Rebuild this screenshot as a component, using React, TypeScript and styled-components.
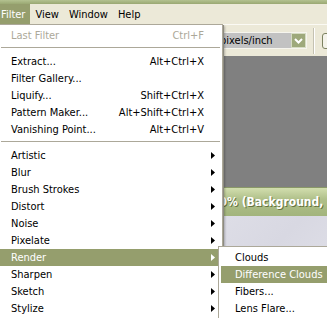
import React from 'react';
import styled, { createGlobalStyle } from 'styled-components';

const GlobalStyle = createGlobalStyle`
  html, body {
    margin: 0;
    padding: 0;
    overflow: hidden;
  }
`;

const Screen = styled('div')`
  position: relative;
  width: 327px;
  height: 318px;
  overflow: hidden;
  display: flex;
  flex-direction: column;
  font-family: "DejaVu Sans Condensed", "Liberation Sans", sans-serif;
  font-size: 11px;
  color: #000;
  background: #ece9d8;
`;

const TitleStrip = styled('div')`
  height: 4px;
  background: linear-gradient(#b4c290, #9aa872);
`;

const MenuBar = styled('div')`
  display: flex;
  height: 20px;
  background: #ece9d8;
`;

const MenuTitle = styled('div')<{ $active?: boolean; $first?: boolean }>`
  display: flex;
  align-items: center;
  padding: ${p => (p.$first ? '0 5px 0 1px' : '0 5px')};
  background: ${p => (p.$active ? '#959e6d' : 'transparent')};
  color: ${p => (p.$active ? '#fff' : '#000')};
`;

const Toolbar = styled('div')`
  display: flex;
  align-items: center;
  height: 32px;
  padding-left: 186px;
  box-sizing: border-box;
  border-top: 1px solid #fbfaf4;
  background: #ece9d8;
  & > * {
    flex-shrink: 0;
  }
`;

const UnitSelect = styled('div')`
  display: flex;
  align-items: center;
  width: 121px;
  height: 17px;
  box-sizing: border-box;
  border: 1px solid #f6f5ee;
  background: #c2c2c2;
  padding-left: 33px;
`;

const UnitLabel = styled('span')`
  flex: 1;
`;

const DropButton = styled('div')`
  display: flex;
  align-items: center;
  justify-content: center;
  width: 15px;
  height: 15px;
  box-sizing: border-box;
  border: 1px solid #d6dcc4;
  background: #9ea97b;
`;

const ToolDivider = styled('div')`
  width: 1px;
  height: 26px;
  margin: 0 7px 0 6px;
  background: #c5c2b2;
  border-right: 1px solid #fff;
`;

const FrontButton = styled('div')`
  width: 40px;
  height: 16px;
  box-sizing: border-box;
  border: 1px solid #7c8260;
  border-radius: 3px;
  background: #f4f3ea;
`;

const Workspace = styled('div')`
  flex: 1;
  display: flex;
  padding: 131px 0 0 117px;
  background: #808080;
`;

const DocWindow = styled('div')`
  flex: 1;
  display: flex;
  flex-direction: column;
  min-width: 0;
`;

const DocTitle = styled('div')`
  display: flex;
  align-items: center;
  height: 28px;
  padding-left: 8px;
  border-top: 1px solid #8a9868;
  background: linear-gradient(#d2deae, #b0c08a 40%, #a2b47c);
  color: #fff;
  font-family: "DejaVu Sans Condensed", "Liberation Sans", sans-serif;
  font-weight: bold;
  font-size: 12px;
  white-space: nowrap;
  overflow: hidden;
  text-shadow: 1px 1px 0 #66743f;
`;

const DocCanvas = styled('div')`
  flex: 1;
  background: linear-gradient(135deg, #e4e4ec, #d8d8e2 60%, #e2e2ea);
`;

const DropMenu = styled('div')`
  position: absolute;
  top: 24px;
  left: -1px;
  width: 224px;
  box-sizing: border-box;
  padding: 2px 0;
  border: 1px solid #aca899;
  background: #fff;
  box-shadow: 1px 1px 0 #8d8b80, 2px 2px 2px rgba(0, 0, 0, 0.25);
`;

const SubMenu = styled('div')`
  position: absolute;
  top: 246px;
  left: 218px;
  width: 140px;
  box-sizing: border-box;
  padding: 2px 2px;
  border: 1px solid #aca899;
  background: #fff;
`;

const Row = styled('div')<{ $active?: boolean; $disabled?: boolean }>`
  display: flex;
  align-items: center;
  height: 17px;
  padding-left: 11px;
  background: ${p => (p.$active ? '#959e6d' : 'transparent')};
  color: ${p => (p.$active ? '#fff' : p.$disabled ? '#aca899' : '#000')};
  white-space: nowrap;
`;

const SubRow = styled(Row)`
  padding-left: 14px;
`;

const Label = styled('span')`
  flex: 1;
`;

const Shortcut = styled('span')``;

const ArrowSlot = styled('span')`
  display: flex;
  align-items: center;
  width: 18px;
  height: 100%;
  padding-left: 7px;
  box-sizing: border-box;
`;

const Separator = styled('div')`
  height: 1px;
  margin: 3px 2px 5px 1px;
  background: #aca899;
`;

type TItem = {
  label: string;
  shortcut?: string;
  sub?: boolean;
  active?: boolean;
  disabled?: boolean;
};

const groups: TItem[][] = [
  [{ label: 'Last Filter', shortcut: 'Ctrl+F', disabled: true }],
  [
    { label: 'Extract...', shortcut: 'Alt+Ctrl+X' },
    { label: 'Filter Gallery...' },
    { label: 'Liquify...', shortcut: 'Shift+Ctrl+X' },
    { label: 'Pattern Maker...', shortcut: 'Alt+Shift+Ctrl+X' },
    { label: 'Vanishing Point...', shortcut: 'Alt+Ctrl+V' },
  ],
  [
    { label: 'Artistic', sub: true },
    { label: 'Blur', sub: true },
    { label: 'Brush Strokes', sub: true },
    { label: 'Distort', sub: true },
    { label: 'Noise', sub: true },
    { label: 'Pixelate', sub: true },
    { label: 'Render', sub: true, active: true },
    { label: 'Sharpen', sub: true },
    { label: 'Sketch', sub: true },
    { label: 'Stylize', sub: true },
  ],
];

const renderItems = ['Clouds', 'Difference Clouds', 'Fibers...', 'Lens Flare...'];

const Arrow = ({ color }: { color: string }) => (
  <svg width="4" height="7" viewBox="0 0 4 7">
    <polygon points="0,0 4,3.5 0,7" fill={color} />
  </svg>
);

const App: React.FC = () => {
  return (
    <Screen>
      <GlobalStyle />
      <TitleStrip />
      <MenuBar>
        <MenuTitle $active $first>Filter</MenuTitle>
        <MenuTitle>View</MenuTitle>
        <MenuTitle>Window</MenuTitle>
        <MenuTitle>Help</MenuTitle>
      </MenuBar>
      <Toolbar>
        <UnitSelect>
          <UnitLabel>pixels/inch</UnitLabel>
          <DropButton>
            <svg width="9" height="6" viewBox="0 0 9 6">
              <polyline points="1,1 4.5,4.5 8,1" fill="none" stroke="#fff" strokeWidth="2" />
            </svg>
          </DropButton>
        </UnitSelect>
        <ToolDivider />
        <FrontButton />
      </Toolbar>
      <Workspace>
        <DocWindow>
          <DocTitle>Untitled-1 @ 100% (Background, RGB/8)</DocTitle>
          <DocCanvas />
        </DocWindow>
      </Workspace>

      <DropMenu>
        {groups.map((group, gi) => (
          <React.Fragment key={gi}>
            {gi > 0 && <Separator />}
            {group.map(item => (
              <Row key={item.label} $active={item.active} $disabled={item.disabled}>
                <Label>{item.label}</Label>
                {item.shortcut && <Shortcut>{item.shortcut}</Shortcut>}
                <ArrowSlot>{item.sub && <Arrow color={item.active ? '#fff' : '#000'} />}</ArrowSlot>
              </Row>
            ))}
          </React.Fragment>
        ))}
      </DropMenu>

      <SubMenu>
        {renderItems.map(name => (
          <SubRow key={name} $active={name === 'Difference Clouds'}>
            {name}
          </SubRow>
        ))}
      </SubMenu>
    </Screen>
  );
};

export default App;
